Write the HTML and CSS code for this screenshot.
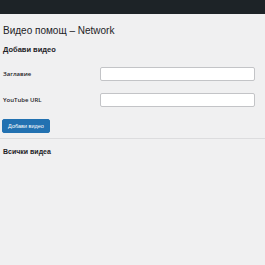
FILE: index.html
```html
<!DOCTYPE html>
<html lang="bg">
<head>
    <meta charset="UTF-8">
    <meta name="viewport" content="width=device-width, initial-scale=1.0">
    <title>Видео помощ – Network</title>
    <link rel="stylesheet" href="styles.css">
</head>
<body>
    <div class="admin-bar"></div>

    <div class="wrap">
        <h1 class="page-title">Видео помощ – Network</h1>

        <h2 class="section-title">Добави видео</h2>
        <form class="video-form">
            <div class="form-row">
                <label for="videoTitle" class="form-label">Заглавие</label>
                <input type="text" id="videoTitle" class="form-input">
            </div>
            <div class="form-row">
                <label for="videoUrl" class="form-label">YouTube URL</label>
                <input type="text" id="videoUrl" class="form-input">
            </div>
            <button type="button" class="button-primary">Добави видео</button>
        </form>

        <hr class="separator">

        <h2 class="section-title list-title">Всички видеа</h2>
    </div>
</body>
</html>
```

FILE: styles.css
```css
body {
    font-family: "Liberation Sans", Arial, sans-serif;
    margin: 0;
    padding: 0;
    background-color: #f0f0f1;
    color: #1d2327;
}
.admin-bar {
    height: 14px;
    background-color: #1d2327;
}
.wrap {
    padding: 0 10px 0 3px;
}
.page-title {
    margin: 10px 0 0;
    font-size: 10px;
    line-height: 13px;
    font-weight: 400;
}
.section-title {
    margin: 8px 0 0;
    font-size: 7.5px;
    line-height: 10px;
    font-weight: 700;
}
.video-form {
    display: flex;
    flex-direction: column;
    align-items: flex-start;
}
.form-row {
    display: flex;
    align-items: center;
    margin-top: 12px;
    width: 100%;
}
.form-label {
    width: 97px;
    font-family: "Open Sans", "Liberation Sans", sans-serif;
    font-size: 6px;
    font-weight: 600;
    color: #1d2327;
}
.form-input {
    width: 155px;
    height: 14px;
    box-sizing: border-box;
    margin: 0;
    padding: 0 3px;
    border: 1px solid #c3c4c7;
    border-radius: 2px;
    background-color: #fff;
    outline: none;
}
.button-primary {
    margin-top: 12px;
    margin-left: -1px;
    width: 48px;
    height: 14px;
    padding: 0;
    border: 1px solid #2271b1;
    border-radius: 2px;
    background-color: #2271b1;
    color: #fff;
    font-family: inherit;
    font-size: 5.5px;
    cursor: pointer;
}
.separator {
    margin: 5px 0 0 -3px;
    border: none;
    border-top: 1px solid #dcdcde;
    width: 265px;
}
.list-title {
    margin-top: 8px;
    font-size: 7px;
    color: #1d2327;
}
```
